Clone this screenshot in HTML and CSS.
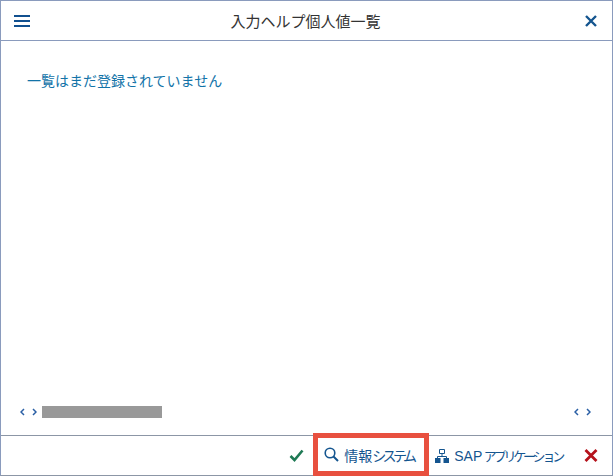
FILE: index.html
```html
<!DOCTYPE html>
<html lang="ja">
<head>
    <meta charset="UTF-8">
    <title>入力ヘルプ個人値一覧</title>
    <link rel="stylesheet" href="styles.css">
</head>
<body>
    <div class="dialog">
        <div class="header">
            <svg class="icon-menu" width="16" height="12" viewBox="0 0 16 12"><path d="M0 1h16M0 6h16M0 11h16" stroke="#11508f" stroke-width="2"/></svg>
            <div class="title">入力ヘルプ個人値一覧</div>
            <svg class="icon-close" width="12" height="12" viewBox="0 0 12 12"><path d="M1 1l10 10M11 1L1 11" stroke="#14558f" stroke-width="2.4"/></svg>
        </div>
        <div class="content">
            <p class="message">一覧はまだ登録されていません</p>
            <div class="scroll">
                <div class="scroll-left">
                    <span class="arrows">
                        <svg width="5" height="8" viewBox="0 0 5 8"><path d="M4 1L1 4l3 3" fill="none" stroke="#2a5fa5" stroke-width="1.5"/></svg>
                        <svg width="5" height="8" viewBox="0 0 5 8"><path d="M1 1l3 3-3 3" fill="none" stroke="#2a5fa5" stroke-width="1.5"/></svg>
                    </span>
                    <div class="thumb"></div>
                </div>
                <span class="arrows">
                    <svg width="5" height="8" viewBox="0 0 5 8"><path d="M4 1L1 4l3 3" fill="none" stroke="#2a5fa5" stroke-width="1.5"/></svg>
                    <svg width="5" height="8" viewBox="0 0 5 8"><path d="M1 1l3 3-3 3" fill="none" stroke="#2a5fa5" stroke-width="1.5"/></svg>
                </span>
            </div>
        </div>
        <div class="footer">
            <svg class="icon-ok" width="15" height="13" viewBox="0 0 15 13"><path d="M1.500 7l4 4L13.500 1.500" fill="none" stroke="#1f7a55" stroke-width="2.600"/></svg>
            <div class="btn btn-marked">
                <svg width="15" height="15" viewBox="0 0 15 15"><circle cx="6" cy="6" r="4.800" fill="none" stroke="#14558f" stroke-width="1.600"/><path d="M9.500 9.500l4.500 4.500" stroke="#14558f" stroke-width="2"/></svg>
                <span class="label">情報<span class="kana">システム</span></span>
            </div>
            <div class="btn">
                <svg width="14" height="14" viewBox="0 0 14 14"><path d="M4.500 0.500h5v4h-5z" fill="none" stroke="#14558f"/><path d="M7 4.500v3M2.500 9V7.500h9V9" fill="none" stroke="#14558f"/><path d="M0 9h5.500v5H0zM8.500 9H14v5H8.500z" fill="#14558f"/></svg>
                <span class="label"><span class="latin">SAP</span> <span class="kana kana-long">アプリケーション</span></span>
            </div>
            <svg class="icon-cancel" width="14" height="13" viewBox="0 0 14 13"><path d="M1.500 1l11 11M12.500 1l-11 11" stroke="#b5121b" stroke-width="2.800"/></svg>
        </div>
    </div>
</body>
</html>
```

FILE: styles.css
```css
html, body { margin: 0; padding: 0; background: #fff; }
body { font-family: "Liberation Sans", "Noto Sans CJK JP", sans-serif; }
.dialog { width: 613px; height: 476px; box-sizing: border-box; border: 1px solid #8a9bbd; border-bottom-color: #8c96a6; display: flex; flex-direction: column; }
.header { height: 40px; box-sizing: border-box; flex: none; display: flex; align-items: center; padding: 0 15px 0 13px; border-bottom: 1px solid #8a9bbd; }
.title { flex: 1; text-align: center; font-size: 15px; color: #333; padding-right: 4px; }
.content { flex: 1; display: flex; flex-direction: column; padding: 0 21px 0 19px; }
.message { margin: 31px 0 0 7px; font-size: 14px; line-height: 18px; color: #1273a8; flex: 1; }
.scroll { display: flex; justify-content: space-between; align-items: center; height: 12px; margin-bottom: 17px; }
.scroll-left { display: flex; align-items: center; gap: 5px; }
.arrows { display: flex; gap: 7px; }
.thumb { width: 120px; height: 12px; background: #999; }
.footer { height: 40px; box-sizing: border-box; flex: none; border-top: 1px solid #8c96a6; display: flex; align-items: center; padding: 0 14px 0 0; justify-content: flex-end; }
.btn { display: flex; align-items: center; gap: 5px; font-size: 14px; color: #14558f; white-space: nowrap; }
.btn-marked { box-sizing: border-box; width: 116px; height: 43px; padding: 0 0 0 6px; margin: 0 6px 2px 9px; border: 5px solid #e8503f; }
.kana { letter-spacing: -3.600px; }
.latin { font-size: 14px; }
.kana-long { font-size: 13px; letter-spacing: -3.200px; margin-left: -2px; }
.icon-cancel { margin-left: 22px; }
```
